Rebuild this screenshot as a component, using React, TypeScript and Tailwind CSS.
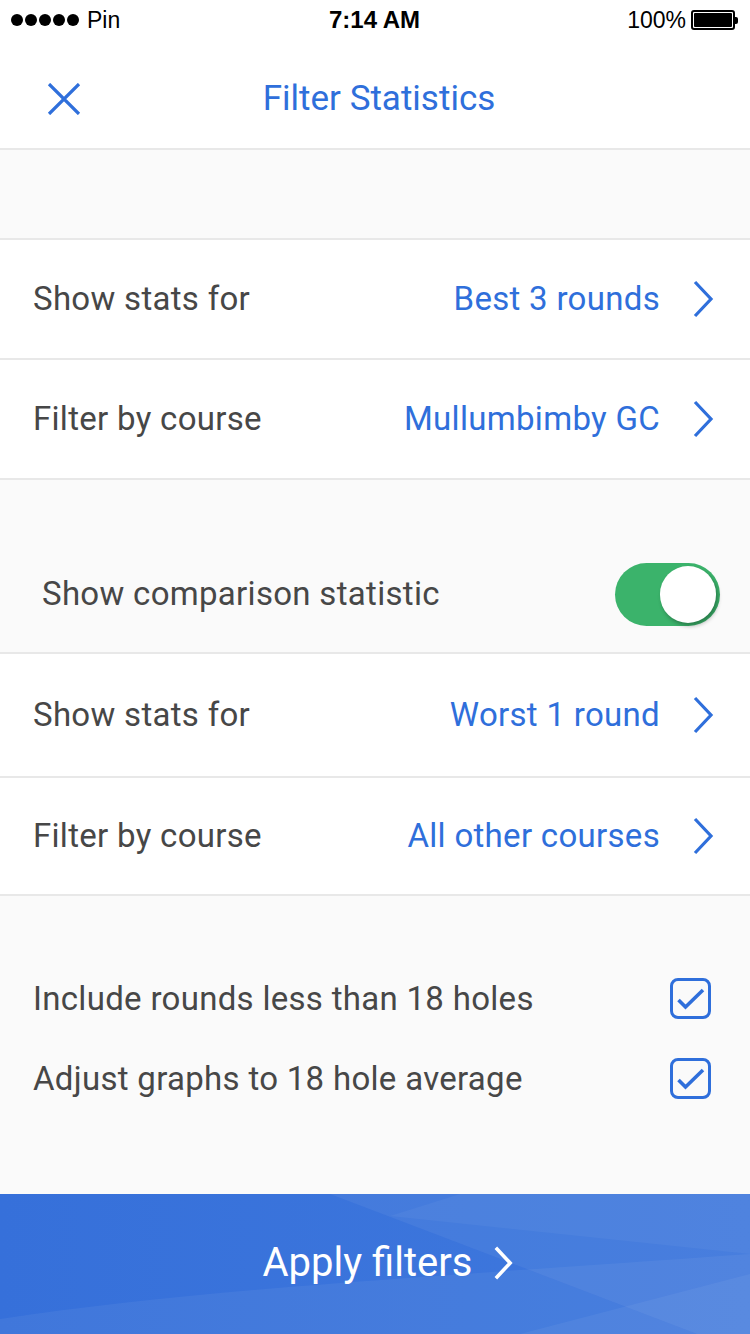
import { FunctionComponent } from "react";

const Chevron: FunctionComponent<{ color?: string; className?: string; sw?: string }> = ({
  color = "#2f6fdb",
  className = "w-[22px] h-[38px]",
  sw = "3.2",
}) => (
  <svg viewBox="0 0 22 38" className={className} fill="none">
    <path d="M3 2 L19 19 L3 36" stroke={color} strokeWidth={sw} strokeLinecap="butt" strokeLinejoin="miter" />
  </svg>
);

const Check: FunctionComponent = () => (
  <div className="w-[41px] h-[41px] rounded-[8px] border-[3px] border-[#2f6fdb] flex items-center justify-center">
    <svg viewBox="0 0 30 30" className="w-[30px] h-[30px]" fill="none">
      <path d="M2.5 16 L9.5 23 L27 6" stroke="#2f6fdb" strokeWidth="3.6" />
    </svg>
  </div>
);

const LinkRow: FunctionComponent<{ label: string; value: string; h: string }> = ({ label, value, h }) => (
  <div className={`flex items-center bg-white pl-[33px] pr-[36px] ${h}`}>
    <span className="flex-1 text-[33px] text-[#474747] tracking-[0.3px]">{label}</span>
    <span className="text-[33px] text-[#2f6fdb] mr-[32px] tracking-[0.3px]">{value}</span>
    <Chevron />
  </div>
);

export default function App() {
  const rows1 = [
    { label: "Show stats for", value: "Best 3 rounds" },
    { label: "Filter by course", value: "Mullumbimby GC" },
  ];
  const rows2 = [
    { label: "Show stats for", value: "Worst 1 round" },
    { label: "Filter by course", value: "All other courses" },
  ];

  return (
    <div className="w-[750px] h-[1334px] flex flex-col bg-[#fafafa] overflow-hidden" style={{ fontFamily: "Roboto, 'Noto Sans', sans-serif" }}>
      {/* status bar */}
      <div className="h-[40px] bg-white flex items-center pl-[11px] pr-[12px] text-[23px] text-black" style={{ fontFamily: "'Liberation Sans', Arial, sans-serif" }}>
        <div className="flex-1 flex items-center">
          <div className="flex gap-[2px]">
            {[0, 1, 2, 3, 4].map((d) => (
              <div key={d} className="w-[12px] h-[12px] rounded-full bg-black" />
            ))}
          </div>
          <span className="ml-[8px]">Pin</span>
        </div>
        <div className="font-semibold text-[24px]">7:14 AM</div>
        <div className="flex-1 flex items-center justify-end">
          <span>100%</span>
          <div className="ml-[5px] flex items-center">
            <div className="w-[44px] h-[20px] border-[2px] border-black rounded-[3px] p-[1px]">
              <div className="w-full h-full bg-black rounded-[1px]" />
            </div>
            <div className="w-[3px] h-[7px] bg-black rounded-r-[2px]" />
          </div>
        </div>
      </div>

      {/* nav bar */}
      <div className="h-[110px] bg-white border-b-[2px] border-[#e8e8e8] flex items-center relative pt-[10px]">
        <svg viewBox="0 0 34 32" className="w-[34px] h-[32px] ml-[47px]" fill="none">
          <path d="M2 1 L32 31 M32 1 L2 31" stroke="#2f6fdb" strokeWidth="3.2" />
        </svg>
        <div className="absolute inset-0 flex items-center justify-center pt-[10px] pl-[8px] text-[35px] text-[#2f6fdb]">
          Filter Statistics
        </div>
      </div>

      <div className="h-[90px] bg-[#fafafa] border-b-[2px] border-[#e8e8e8]" />

      {rows1.map((r, i) => (
        <div key={i} className="border-b-[2px] border-[#e8e8e8]">
          <LinkRow label={r.label} value={r.value} h="h-[118px]" />
        </div>
      ))}

      {/* comparison toggle */}
      <div className="h-[174px] bg-[#fafafa] border-b-[2px] border-[#e8e8e8] flex items-end pb-[26px] pl-[42px] pr-[30px]">
        <div className="flex-1 flex items-center h-[64px]">
          <span className="text-[33px] text-[#474747] tracking-[0.3px]">Show comparison statistic</span>
        </div>
        <div className="w-[105px] h-[63px] rounded-full bg-[#3bb36b] relative">
          <div className="absolute right-[4px] top-[3px] w-[56px] h-[57px] rounded-full bg-white shadow-[2px_3px_4px_rgba(0,0,0,0.3)]" />
        </div>
      </div>

      {rows2.map((r, i) => (
        <div key={i} className="border-b-[2px] border-[#e8e8e8]">
          <LinkRow label={r.label} value={r.value} h={i === 0 ? "h-[122px]" : "h-[116px]"} />
        </div>
      ))}

      {/* checkboxes */}
      <div className="flex-1 bg-[#fafafa] flex flex-col pt-[82px] pl-[33px] pr-[39px] gap-[39px]">
        <div className="flex items-center h-[41px]">
          <span className="flex-1 text-[33px] text-[#474747] tracking-[0.3px]">Include rounds less than 18 holes</span>
          <Check />
        </div>
        <div className="flex items-center h-[41px]">
          <span className="flex-1 text-[33px] text-[#474747] tracking-[0.3px]">Adjust graphs to 18 hole average</span>
          <Check />
        </div>
      </div>

      {/* apply button */}
      <div className="h-[140px] relative bg-gradient-to-r from-[#3670da] to-[#3f78dd] flex items-center justify-center overflow-hidden pl-[26px]">
        <svg viewBox="0 0 750 140" className="absolute inset-0 w-full h-full" preserveAspectRatio="none">
          <path d="M330 0 L750 160 L750 0 Z" fill="#ffffff" opacity="0.05" />
          <path d="M460 0 L390 22 L750 60 L750 0 Z" fill="#ffffff" opacity="0.04" />
          <path d="M0 140 L0 125 C200 95 400 85 750 60 L750 140 Z" fill="#ffffff" opacity="0.05" />
          <path d="M520 140 L750 80 L750 140 Z" fill="#ffffff" opacity="0.05" />
        </svg>
        <div className="relative flex items-center text-white text-[40px] -mt-[2px]">
          <span>Apply filters</span>
          <Chevron color="#ffffff" sw="4" className="w-[20px] h-[34px] ml-[21px]" />
        </div>
      </div>
    </div>
  );
}
